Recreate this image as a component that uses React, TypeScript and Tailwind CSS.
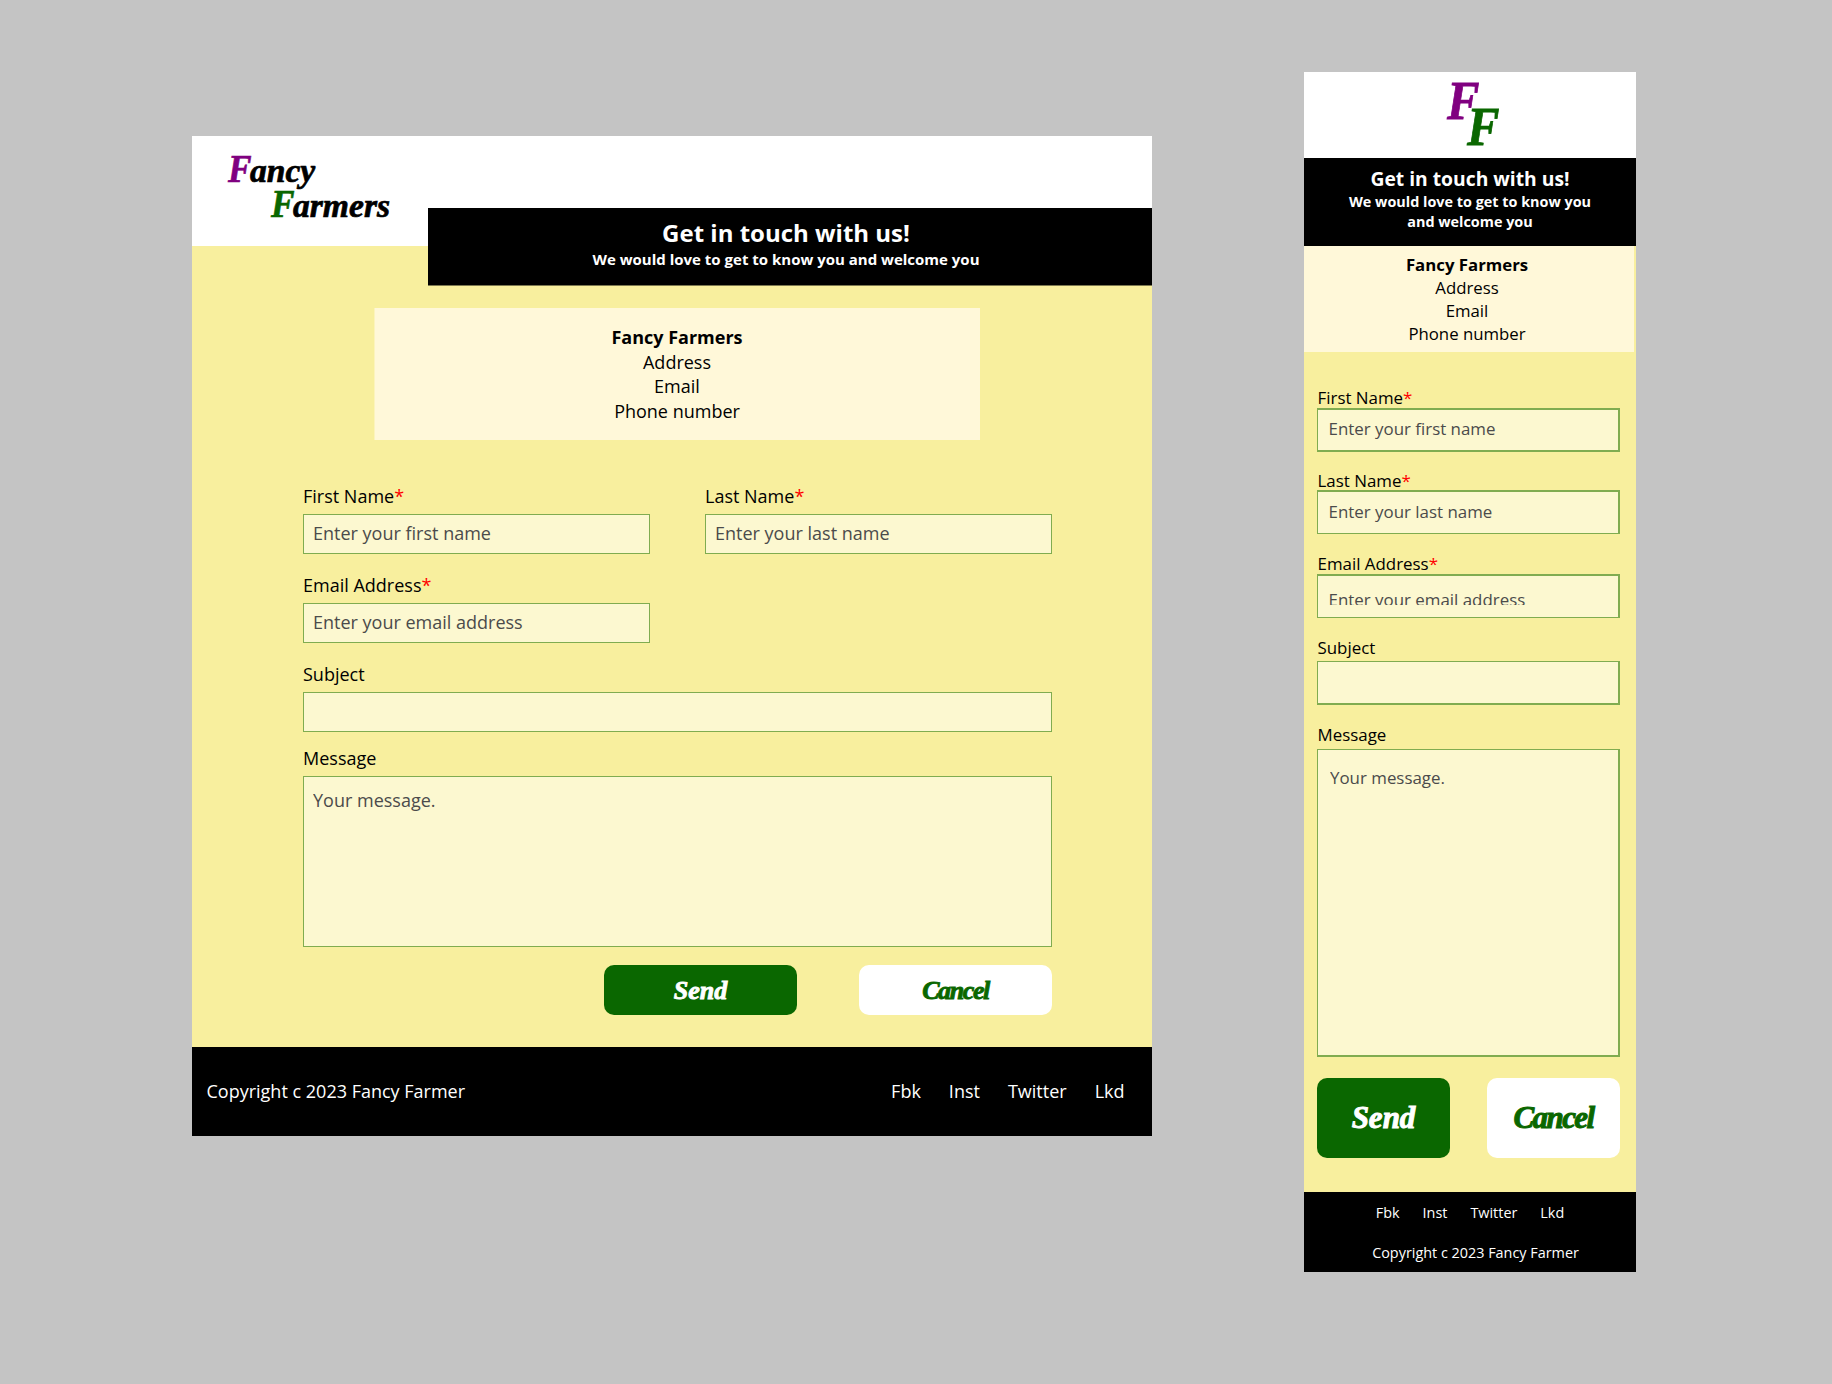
import React from "react";
import { clsx } from "clsx";

const script = "font-['Liberation_Serif'] font-bold italic";

function Label({ children, required, className }: { children: string; required?: boolean; className: string }) {
  return (
    <div className={clsx("whitespace-nowrap text-black", className)}>
      {children}
      {required && <span className="text-[#ff0000]">*</span>}
    </div>
  );
}

function Field({ className, textClass, text }: { className: string; textClass?: string; text?: string }) {
  return (
    <div className={clsx("border-[#80ac50] bg-[#fcf8d0] text-[#4b4b4b]", className)}>
      {text && <div className={clsx("overflow-hidden whitespace-nowrap", textClass)}>{text}</div>}
    </div>
  );
}

function Desktop() {
  const input = "h-10 border pl-[9px]";
  const label = "h-6 text-[18px] leading-6";
  const text = "mt-[6px] text-[18px] leading-6";
  const initial = "w-[22px] origin-bottom-left scale-x-[0.86] text-[41px] leading-[35px]";
  return (
    <section className="mt-16 h-[1000px] w-[960px] shrink-0 bg-[#f8ef9e]">
      <header className="relative h-[110px] bg-white">
        <div className={clsx(script, "pt-[15px] text-[33.6px] leading-[35px] text-black [-webkit-text-stroke:0.7px]")}>
          <div className="flex h-[35px] items-baseline pl-[36px]">
            <span className={clsx(initial, "text-[#800080]")}>F</span>ancy
          </div>
          <div className="flex h-[35px] items-baseline pl-[79px]">
            <span className={clsx(initial, "text-[#0a6700]")}>F</span>armers
          </div>
        </div>
        <div className="absolute left-[236px] top-[72px] h-[78px] w-[724px] border-b border-[#7c7850] bg-black pr-[8px] text-center font-bold text-white">
          <h1 className="mt-[8px] text-[24px] leading-[33px]">Get in touch with us!</h1>
          <p className="text-[15px] leading-[20px]">We would love to get to know you and welcome you</p>
        </div>
      </header>
      <div className="pt-[62px]">
        <div className="ml-[182px] h-[132px] w-[606px] border-l border-[#fcf4bd] bg-[#fff8d9] pr-px pt-[17px] text-center text-[18px] leading-[24.5px]">
          <div className="font-bold">Fancy Farmers</div>
          <div>Address</div>
          <div>Email</div>
          <div>Phone number</div>
        </div>
      </div>
      <div className="ml-[111px] w-[749px] pt-[44px]">
        <div className="flex gap-[55px]">
          <div className="w-[347px]">
            <Label required className={label}>First Name</Label>
            <Field className={clsx(input, "mt-[6px]")} textClass={text} text="Enter your first name" />
          </div>
          <div className="w-[347px]">
            <Label required className={label}>Last Name</Label>
            <Field className={clsx(input, "mt-[6px]")} textClass={text} text="Enter your last name" />
          </div>
        </div>
        <div className="mt-[19px] w-[347px]">
          <Label required className={label}>Email Address</Label>
          <Field className={clsx(input, "mt-[6px]")} textClass={text} text="Enter your email address" />
        </div>
        <div className="mt-[19px]">
          <Label className={label}>Subject</Label>
          <Field className={clsx(input, "mt-[6px]")} />
        </div>
        <div className="mt-[14px]">
          <Label className={label}>Message</Label>
          <Field className="mt-[6px] h-[171px] border pl-[9px] pt-[5px]" textClass={text} text="Your message." />
        </div>
        <div className={clsx(script, "mt-[18px] flex justify-end gap-[62px] text-center text-[26px] leading-[51px] [-webkit-text-stroke:0.9px]")}>
          <div className="h-[50px] w-[193px] rounded-[10px] bg-[#0a6700] text-white">Send</div>
          <div className="h-[50px] w-[193px] rounded-[10px] bg-white tracking-[-1.4px] text-[#0a6700]">Cancel</div>
        </div>
      </div>
      <footer className="mt-[32px] flex h-[89px] items-center justify-between bg-black pb-px pl-[14.5px] pr-[27.5px] text-[18px] leading-6 text-white">
        <div>Copyright c 2023 Fancy Farmer</div>
        <div className="flex gap-[28px]">
          <span>Fbk</span>
          <span>Inst</span>
          <span>Twitter</span>
          <span>Lkd</span>
        </div>
      </footer>
    </section>
  );
}

function Mobile() {
  const label = "text-[16.9px] leading-6 h-6 pl-[0.5px]";
  const text = "text-[16.9px] leading-6";
  return (
    <section className="ml-[152px] h-[1200px] w-[332px] shrink-0 bg-[#f8ef9e]">
      <header className={clsx(script, "flex h-[86px] justify-center bg-white pl-[6px] text-[54px] leading-[52px] [-webkit-text-stroke:0.8px]")}>
        <span className="mt-[3px] w-[20px] origin-left scale-x-90 text-[#800080]">F</span>
        <span className="mt-[29px] w-[32px] origin-left scale-x-90 text-[#0a6700]">F</span>
      </header>
      <div className="h-[88px] bg-black pt-[7px] text-center font-bold text-white">
        <h1 className="text-[19.3px] leading-[27px]">Get in touch with us!</h1>
        <p className="text-[14.4px] leading-[19.5px]">
          We would love to get to know you
          <br />
          and welcome you
        </p>
      </div>
      <div className="h-[106px] w-[330px] bg-[#fff8d9] pr-[4px] pt-[7px] text-center text-[16.8px] leading-[23px]">
        <div className="font-bold">Fancy Farmers</div>
        <div>Address</div>
        <div>Email</div>
        <div>Phone number</div>
      </div>
      <div className="ml-[13px] w-[303px] pt-[34px]">
        <Label required className={label}>First Name</Label>
        <Field className="-mt-[2px] h-[44px] border-2 border-l pl-[10.5px] pt-[7px]" textClass={text} text="Enter your first name" />
        <Label required className={clsx(label, "mt-[17px]")}>Last Name</Label>
        <Field className="-mt-[3px] h-[44px] border border-r-2 border-t-2 pl-[10.5px] pt-[8px]" textClass={text} text="Enter your last name" />
        <Label required className={clsx(label, "mt-[18px]")}>Email Address</Label>
        <Field className="-mt-[2px] h-[44px] border border-r-2 border-t-2 pl-[10.5px] pt-[12px]" textClass={clsx(text, "h-[17px]")} text="Enter your email address" />
        <Label className={clsx(label, "mt-[18px]")}>Subject</Label>
        <Field className="mt-px h-[44px] border border-b-2 border-r-2" />
        <Label className={clsx(label, "mt-[18px]")}>Message</Label>
        <Field className="mt-[2px] h-[308px] border border-b-2 border-r-2 pl-[12px] pt-[16px]" textClass={text} text="Your message." />
        <div className={clsx(script, "mt-[21px] flex justify-between text-center text-[31px] leading-[80px] [-webkit-text-stroke:1px]")}>
          <div className="h-[80px] w-[133px] rounded-[10px] bg-[#0a6700] text-white">Send</div>
          <div className="h-[80px] w-[133px] rounded-[10px] bg-white tracking-[-1.6px] text-[#0a6700]">Cancel</div>
        </div>
      </div>
      <footer className="mt-[34px] flex h-[80px] flex-col items-center bg-black text-[14.4px] leading-5 text-white">
        <div className="mt-[11px] flex gap-[23px]">
          <span>Fbk</span>
          <span>Inst</span>
          <span>Twitter</span>
          <span>Lkd</span>
        </div>
        <div className="mt-[20px] pl-[11px]">Copyright c 2023 Fancy Farmer</div>
      </footer>
    </section>
  );
}

export default function App() {
  return (
    <main className="flex h-[1384px] w-[1832px] items-start overflow-hidden bg-[#c4c4c4] pl-[192px] pt-[72px] font-['Open_Sans',sans-serif]">
      <Desktop />
      <Mobile />
    </main>
  );
}
